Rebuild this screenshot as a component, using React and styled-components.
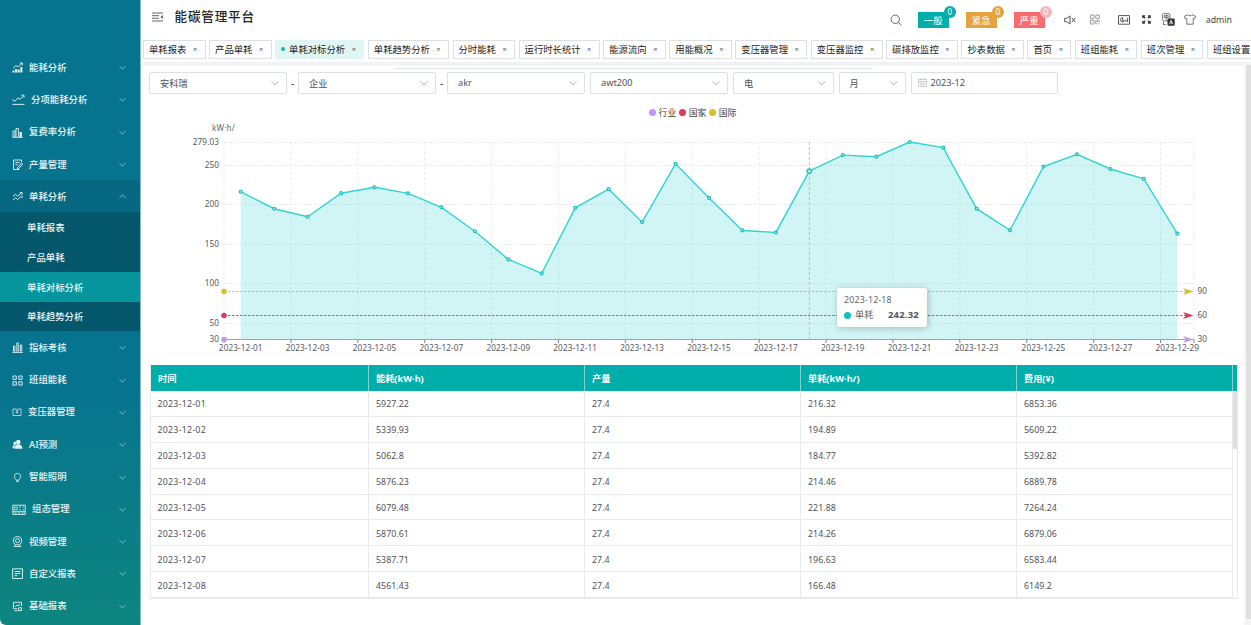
import styled, { createGlobalStyle } from "styled-components";

const GlobalStyle = createGlobalStyle`
  * {
    box-sizing: border-box;
  }

  body {
    margin: 0;
    overflow: hidden;
    background-color: #fff;
    font-family: "Noto Sans", "Noto Sans CJK SC", sans-serif;
    color: #303133;
  }

  svg {
    display: block;
    flex: none;
  }
`;

const menuTop = [
  { icon: "trend", label: "能耗分析" },
  { icon: "line", label: "分项能耗分析", iconWidth: 13, gap: 6 },
  { icon: "bars", label: "复费率分析" },
  { icon: "edit", label: "产量管理" },
  { icon: "compare", label: "单耗分析", open: true },
];

const subMenu = ["单耗报表", "产品单耗", "单耗对标分析", "单耗趋势分析"];

const menuBottom = [
  { icon: "columns", label: "指标考核" },
  { icon: "grid", label: "班组能耗" },
  { icon: "transformer", label: "变压器管理", iconWidth: 10 },
  { icon: "users", label: "AI预测" },
  { icon: "bulb", label: "智能照明" },
  { icon: "config", label: "组态管理", iconWidth: 14, gap: 6 },
  { icon: "camera", label: "视频管理" },
  { icon: "form", label: "自定义报表" },
  { icon: "report", label: "基础报表" },
];

const tabs = [
  "单耗报表",
  "产品单耗",
  "单耗对标分析",
  "单耗趋势分析",
  "分时能耗",
  "运行时长统计",
  "能源流向",
  "用能概况",
  "变压器管理",
  "变压器监控",
  "碳排放监控",
  "抄表数据",
  "首页",
  "班组能耗",
  "班次管理",
  "班组设置",
];

const activePage = "单耗对标分析";

const values = [
  216.32, 194.89, 184.77, 214.46, 221.88, 214.26, 196.63, 166.48, 131, 113.5,
  196, 219.5, 178, 251.5, 208.5, 167.5, 165, 242.32, 262.5, 260.5, 279.03, 272,
  195, 167.8, 248, 263.5, 245, 232.5, 163.5,
];

const marks = [
  { name: "行业", value: 30, color: "#c397f5" },
  { name: "国家", value: 60, color: "#dd3a60" },
  { name: "国际", value: 90, color: "#d3c227" },
];

const columns = ["时间", "能耗(kW·h)", "产量", "单耗(kW·h/)", "费用(¥)"];

const rows = [
  ["2023-12-01", "5927.22", "27.4", "216.32", "6853.36"],
  ["2023-12-02", "5339.93", "27.4", "194.89", "5609.22"],
  ["2023-12-03", "5062.8", "27.4", "184.77", "5392.82"],
  ["2023-12-04", "5876.23", "27.4", "214.46", "6889.78"],
  ["2023-12-05", "6079.48", "27.4", "221.88", "7264.24"],
  ["2023-12-06", "5870.61", "27.4", "214.26", "6879.06"],
  ["2023-12-07", "5387.71", "27.4", "196.63", "6583.44"],
  ["2023-12-08", "4561.43", "27.4", "166.48", "6149.2"],
];

// Iconos del menú lateral
const icons = {
  trend: (
    <>
      <path d="M1 6.2 4 3.6l2 1.3 4-3.7M7.8 1h2.6v2.4" />
      <path d="M1.5 10.5V8.6M4.1 10.5V7M6.7 10.5V7.6M9.4 10.5V5" strokeWidth="2" />
    </>
  ),
  line: <path d="M.4 5.6 3 7.2l3-3.4 2 1.6L11.3 2M9.4 1.2h2.6v2.4M.4 10.4h12.2" />,
  bars: (
    <>
      <path d="M1 10V4h2v6M4 10V1.5h2.4V10M.4 10.3h10.4" />
      <path d="M8.7 10V5" strokeWidth="2.3" />
    </>
  ),
  edit: (
    <>
      <path d="M9.5 3.2V1h-8v9.5h6M3.3 3.5h4.2M3.3 5.6h2.4" />
      <path d="M5.5 8.5 9.4 4l1.3 1-3.8 4.5-1.5.3z" />
    </>
  ),
  compare: <path d="M1 5.4 3.5 3.2l2 2L9.7 1.7M7.8 1.5h2.3v2.2M1 9l2.6-2.3 2 2L9.5 5M10 4.8v2.3" />,
  columns: <path d="M.4 10.4h10.4M1.5 9.2V4h1.4v5.2zM4.8 9.2V1h1.5v8.2zM8.3 9.2V3h1.4v6.2z" />,
  grid: (
    <>
      <path d="M1 1h3.3v3.3H1zM6.8 1h3.3v3.3H6.8zM6.8 6.8h3.3v3.3H6.8z" />
      <rect x="1" y="6.8" width="3.3" height="3.3" />
    </>
  ),
  transformer: <path d="M1 2h3M6 2h3M1 2v6.500h8V2M3.700 3.500h2.600M5 1.500v5M3.700 5.500h2.600" strokeWidth=".7" />,
  users: (
    <g fill="currentColor" stroke="none">
      <circle cx="6.3" cy="3" r="2.2" />
      <path d="M2.6 9.8c0-3 1.4-4.5 3.7-4.5s4.2 1.5 4.2 4.5z" />
      <circle cx="3" cy="4.2" r="1.6" />
      <path d="M.4 9.2c0-2.3 1-3.4 2.6-3.4L2.3 9.2z" />
    </g>
  ),
  bulb: <path d="M3.800 7.200C1.700 5.600 2 1.400 5.500 1.400s3.800 4.200 1.700 5.800L6.500 8.300h-2zM4.200 9.600h2.600" />,
  config: (
    <>
      <path d="M.8 1.2h12.400v9.200H.8zM.8 7.700h12.400" />
      <path d="M2.300 3.200h3v2.600h-3zM7 3h2M7 5.800h2M10.500 3h1.500M10.500 5.800h1.500M2.500 9h2M6 9h2M9.600 9h2" strokeWidth=".8" />
    </>
  ),
  camera: (
    <>
      <circle cx="5.500" cy="4.700" r="4.100" />
      <circle cx="5.500" cy="4.700" r="2" />
      <path d="M3.500 8.500 2.200 10.500h6.600L7.500 8.500" />
    </>
  ),
  form: <path d="M.6.8h9.900v9.700H.6zM2.700 3.500h5.800M2.700 5.600h5.800M2.700 7.700h2.600" />,
  report: (
    <>
      <path d="M9.500 5V1.300H1.500v6.400H5M2.500 9.700h3" />
      <path d="M3.200 5.700 5 4l1.200 1L8 3M6.300 9.500h3.200V6.600l-3.200.5z" />
    </>
  ),
};

const MenuIcon = ({ name, width = 11 }) => (
  <svg
    width={width}
    height="11"
    viewBox={`0 0 ${width} 11`}
    fill="none"
    stroke="currentColor"
    strokeWidth="0.9"
  >
    {icons[name]}
  </svg>
);

const Chevron = ({ up, size = 7 }) => (
  <svg width={size} height={size} viewBox="0 0 8 8" fill="none" stroke="currentColor">
    <path d={up ? "M.5 5.500 4 2.300l3.500 3.200" : "M.5 2.500 4 5.700l3.500-3.200"} strokeWidth="0.9" />
  </svg>
);

const MenuEntry = ({ item }) => (
  <MenuItem $open={item.open}>
    <MenuIcon name={item.icon} width={item.iconWidth} />
    <MenuLabel $gap={item.gap}>{item.label}</MenuLabel>
    <Chevron up={item.open} />
  </MenuItem>
);

const Sidebar = () => (
  <StyledSidebar>
    {menuTop.map((item) => (
      <MenuEntry key={item.label} item={item} />
    ))}
    {subMenu.map((label) => (
      <SubItem key={label} $active={label === activePage}>
        {label}
      </SubItem>
    ))}
    {menuBottom.map((item) => (
      <MenuEntry key={item.label} item={item} />
    ))}
  </StyledSidebar>
);

const Header = () => (
  <StyledHeader>
    <svg width="11" height="10" viewBox="0 0 11 10" fill="none" stroke="#555" strokeWidth="0.9">
      <path d="M0 1h11M0 3.700h7M0 6.300h7M0 9h11" />
      <path d="M10.800 3v4L8.500 5z" fill="#555" stroke="none" />
    </svg>
    <Title>能碳管理平台</Title>
    <Tools>
      <svg width="12" height="12" viewBox="0 0 12 12" fill="none" stroke="#666">
        <circle cx="5.300" cy="5.300" r="4.200" />
        <path d="m8.400 8.400 3 3" />
      </svg>
      <Alarm $color="#01aeaa" $left={16}>
        一般<Count $color="#01aeaa">0</Count>
      </Alarm>
      <Alarm $color="#e6a23c" $left={17}>
        紧急<Count $color="#e6a23c">0</Count>
      </Alarm>
      <Alarm $color="#f86c6e" $left={17}>
        严重<Count $color="#fbb5b6">0</Count>
      </Alarm>
      <ToolIcon $left={19}>
        <svg width="12" height="10" viewBox="0 0 12 10" fill="none" stroke="#444" strokeWidth="0.9">
          <path d="M.7 3.300h2.200L6 .9v8.200L2.900 6.700H.7zM7.800 2.800l3.600 4.400M11.400 2.800 7.800 7.200" />
        </svg>
      </ToolIcon>
      <ToolIcon $left={14}>
        <svg width="10" height="11" viewBox="0 0 10 11" fill="none" stroke="#777" strokeWidth="0.8">
          <rect x=".5" y="1" width="3.500" height="3.700" rx=".5" />
          <rect x="5.800" y="1" width="3.500" height="3.700" rx=".5" />
          <rect x=".5" y="6.300" width="3.500" height="3.700" rx=".5" />
          <path d="M5.900 6v4.200M7.500 6v2M9.200 6v2M7.500 9.800h2" />
        </svg>
      </ToolIcon>
      <ToolIcon $left={18}>
        <svg width="12" height="10" viewBox="0 0 12 10" fill="none" stroke="#444" strokeWidth="0.9">
          <path d="M.5.600h11v8.600H.5z" />
          <path d="M4.600 2.700a2.100 2.100 0 1 0 1.900 3H4.600zM8 7V4.500M9.600 7V2.800" />
        </svg>
      </ToolIcon>
      <ToolIcon $left={12}>
        <svg width="9" height="9" viewBox="0 0 9 9" fill="none" stroke="#333" strokeWidth="1.200">
          <path d="M.8 3V.8H3M6 .8h2.200V3M8.200 6v2.200H6M3 8.200H.8V6M.8.800l2.500 2.500M8.200.800 5.700 3.300M8.200 8.200 5.700 5.700M.8 8.200l2.500-2.500" />
        </svg>
      </ToolIcon>
      <ToolIcon $left={11}>
        <svg width="13" height="13" viewBox="0 0 13 13" fill="none" stroke="#555" strokeWidth="0.8">
          <rect x=".6" y=".6" width="7.300" height="7.300" rx="1" />
          <path d="M2.300 2.600h3.900v2H2.300zM4.250 1.600v5M1.500 9v2.500H4" />
          <rect x="5.500" y="5.500" width="7.200" height="7.200" rx="1" fill="#333" stroke="none" />
          <path d="m7.500 11.200 1.600-4 1.600 4M8.100 9.900h2" stroke="#fff" />
        </svg>
      </ToolIcon>
      <ToolIcon $left={9}>
        <svg width="12" height="11" viewBox="0 0 12 11" fill="none" stroke="#555" strokeWidth="0.8">
          <path d="M4 .7c.4 1.400 3.600 1.400 4 0l3.500 1.500-.8 2.700-1.500-.4v5.700H2.800V4.500l-1.500.4L.5 2.200z" />
        </svg>
      </ToolIcon>
      <User>admin</User>
    </Tools>
  </StyledHeader>
);

const TabBar = () => (
  <StyledTabBar>
    {tabs.map((label) => (
      <Tab key={label} $active={label === activePage}>
        {label}
        <Close>×</Close>
      </Tab>
    ))}
  </StyledTabBar>
);

const Filters = () => (
  <StyledFilters>
    <Select $width={138}>
      安科瑞 <Chevron size={8} />
    </Select>
    <Dash>-</Dash>
    <Select $width={138}>
      企业 <Chevron size={8} />
    </Select>
    <Dash>-</Dash>
    <Select $width={138}>
      akr <Chevron size={8} />
    </Select>
    <Select $width={138} $left={5}>
      awt200 <Chevron size={8} />
    </Select>
    <Select $width={101} $left={5}>
      电 <Chevron size={8} />
    </Select>
    <Select $width={67} $left={4.5}>
      月 <Chevron size={8} />
    </Select>
    <DateInput>
      <svg width="9" height="9" viewBox="0 0 9 9" fill="none" stroke="#b6b9c0" strokeWidth="0.7">
        <path d="M.5 1.400h8v7.100h-8zM.5 3.400h8M2.500.300v1.800M6.500.300v1.800M2 5h5M2 6.800h5" />
      </svg>
      2023-12
    </DateInput>
  </StyledFilters>
);

const plot = { left: 83, right: 1053, top: 44, bottom: 241.500 };
const step = (plot.right - plot.left) / values.length;
const maxValue = 279.03;
const minValue = 30;
const toX = (index) => plot.left + step * (index + 0.5);
const toY = (value) =>
  plot.bottom -
  ((value - minValue) / (maxValue - minValue)) * (plot.bottom - plot.top);

const Chart = () => {
  const points = values.map((value, index) => `${toX(index)},${toY(value)}`);
  const ticks = [279.03, 250, 200, 150, 100, 50, 30];
  const labels = values.map((_, index) => index).filter((index) => index % 2 === 0);

  return (
    <ChartBox>
      <Legend>
        {marks.map((mark) => (
          <LegendItem key={mark.name} $color={mark.color}>
            {mark.name}
          </LegendItem>
        ))}
      </Legend>
      <ChartSvg width="1103" height="264" viewBox="0 0 1103 264">
        <AxisText x="71" y="33" $name>
          kW·h/
        </AxisText>
        {ticks.map((tick) => (
          <g key={tick}>
            <line
              x1={plot.left}
              x2={plot.right}
              y1={Math.round(toY(tick) - 0.5) + 0.5}
              y2={Math.round(toY(tick) - 0.5) + 0.5}
              stroke="#e8eaed"
              strokeDasharray="3 2"
            />
            <AxisText x="78" y={toY(tick) + 2.500} textAnchor="end">
              {tick}
            </AxisText>
          </g>
        ))}
        {labels.map((index) => (
          <g key={index}>
            <line
              x1={plot.left + step * index}
              x2={plot.left + step * index}
              y1={plot.top}
              y2={plot.bottom}
              stroke="#ebedf0"
              strokeDasharray="3 2"
            />
            <AxisText x={toX(index)} y="253" textAnchor="middle">
              {`2023-12-${String(index + 1).padStart(2, "0")}`}
            </AxisText>
          </g>
        ))}
        <line
          x1={plot.right}
          x2={plot.right}
          y1={plot.top}
          y2={plot.bottom}
          stroke="#ebedf0"
          strokeDasharray="3 2"
        />
        <polygon
          points={`${toX(0)},${plot.bottom} ${points.join(" ")} ${toX(28)},${plot.bottom}`}
          fill="#1bcfcf"
          fillOpacity="0.2"
        />
        <line x1={plot.left} x2={plot.right} y1="241.500" y2="241.500" stroke="#6e7099" strokeWidth="0.8" />
        {[...labels, 29].map((index) => (
          <line
            key={index}
            x1={plot.left + step * index}
            x2={plot.left + step * index}
            y1="242"
            y2="245"
            stroke="#5b5f93"
            strokeWidth="0.8"
          />
        ))}
        <line
          x1={toX(17)}
          x2={toX(17)}
          y1={plot.top}
          y2={plot.bottom}
          stroke="#a9b3b8"
          strokeWidth="0.8"
          strokeDasharray="3 2"
        />
        <polyline points={points.join(" ")} fill="none" stroke="#34d3d3" strokeWidth="1.400" />
        {values.map((value, index) => (
          <circle
            key={index}
            cx={toX(index)}
            cy={toY(value)}
            r={index === 17 ? 2.300 : 1.500}
            fill="#a6e9e9"
            stroke="#1fbfbf"
            strokeWidth="1.200"
          />
        ))}
        {marks.map((mark) => {
          const y = Math.round(toY(mark.value) - 0.5) + 0.5;
          return (
            <g key={mark.name}>
              <line
                x1={plot.left}
                x2={plot.right - 7}
                y1={y}
                y2={y}
                stroke={mark.color}
                strokeWidth="0.9"
                strokeDasharray="2.600 1.400"
              />
              <circle cx={plot.left} cy={y} r="2.800" fill={mark.color} />
              <path
                d={`M${plot.right - 0.5} ${y}l-10.500 -3.600l2.800 3.600l-2.800 3.600z`}
                fill={mark.color}
              />
              <AxisText x={plot.right + 3.500} y={y + 2.500}>
                {mark.value}
              </AxisText>
            </g>
          );
        })}
      </ChartSvg>
      <Tooltip>
        <TooltipDate>2023-12-18</TooltipDate>
        <TooltipRow>
          单耗 <strong>242.32</strong>
        </TooltipRow>
      </Tooltip>
    </ChartBox>
  );
};

const DataTable = () => (
  <StyledTable>
    <TableRow $head>
      {columns.map((column) => (
        <HeadCell key={column}>{column}</HeadCell>
      ))}
    </TableRow>
    <TableBody>
      <div>
        {rows.map((row) => (
          <TableRow key={row[0]}>
            {row.map((value, index) => (
              <Cell key={index} $date={index === 0}>
                {value}
              </Cell>
            ))}
          </TableRow>
        ))}
      </div>
      <TableThumb />
    </TableBody>
  </StyledTable>
);

export default function App() {
  return (
    <Layout>
      <GlobalStyle />
      <Sidebar />
      <Main>
        <Header />
        <TabBar />
        <Content>
          <Page>
            <TopLine />
            <Filters />
            <Chart />
            <DataTable />
          </Page>
          <PageScroll />
        </Content>
      </Main>
    </Layout>
  );
}

const Layout = styled.div`
  display: flex;
  width: 1251px;
  height: 625px;
  overflow: hidden;
  border-radius: 0 6px 0 6px;
`;

const StyledSidebar = styled.nav`
  flex: none;
  width: 141px;
  padding-top: 51px;
  border-right: 1px solid #85bccb;
  background: linear-gradient(180deg, #07748f 0%, #07748f 62%, #0d857f 100%);
  color: #eaf5f7;
`;

const MenuItem = styled.div`
  display: flex;
  align-items: center;
  height: 32.3px;
  padding: 1px 14px 0 12px;
  background-color: ${({ $open }) => ($open ? "#076981" : "transparent")};

  svg:last-child {
    color: #a5ccd6;
  }
`;

const MenuLabel = styled.span`
  flex: 1;
  margin-left: ${({ $gap = 6 }) => $gap}px;
  font-size: 9.4px;
  font-weight: 500;
  line-height: 14px;
  white-space: nowrap;
`;

const SubItem = styled.div`
  display: flex;
  align-items: center;
  height: 29.7px;
  padding-left: 27px;
  background-color: ${({ $active }) => ($active ? "#06959d" : "#05586b")};
  font-size: 9.4px;
  font-weight: 500;
`;

const Main = styled.main`
  flex: 1;
  min-width: 0;
  display: flex;
  flex-direction: column;
`;

const StyledHeader = styled.header`
  display: flex;
  align-items: center;
  height: 36px;
  padding: 0 19px 3px 11px;
`;

const Title = styled.h1`
  margin: 0 0 0 11.5px;
  font-size: 12.6px;
  font-weight: 500;
  letter-spacing: 0.8px;
  line-height: 18px;
  color: #222;
`;

const Tools = styled.div`
  display: flex;
  align-items: center;
  margin-left: auto;
  padding-top: 6px;
`;

const Alarm = styled.div`
  position: relative;
  display: flex;
  align-items: center;
  justify-content: center;
  width: 31px;
  height: 16px;
  margin-left: ${({ $left }) => $left}px;
  background-color: ${({ $color }) => $color};
  font-size: 9.4px;
  color: #fff;
`;

const Count = styled.span`
  position: absolute;
  top: -6px;
  right: -7px;
  width: 12px;
  height: 12px;
  border-radius: 6px;
  background-color: ${({ $color }) => $color};
  font-size: 8px;
  line-height: 12px;
  text-align: center;
`;

const ToolIcon = styled.span`
  margin-left: ${({ $left }) => $left}px;
`;

const User = styled.span`
  margin-left: 10px;
  font-size: 8.8px;
  line-height: 14px;
  color: #444;
`;

const StyledTabBar = styled.div`
  display: flex;
  gap: 3.5px;
  height: 26px;
  padding: 4px 0 0 2px;
  overflow: hidden;
`;

const Tab = styled.div`
  flex: none;
  display: flex;
  align-items: center;
  height: 18.5px;
  padding: 0 5px 1px;
  border: 1px solid ${({ $active }) => ($active ? "#e0f6f4" : "#dcdfe4")};
  background-color: ${({ $active }) => ($active ? "#e0f6f4" : "#fff")};
  font-size: 9.35px;
  color: #222;
  white-space: nowrap;

  &::before {
    content: "";
    display: ${({ $active }) => ($active ? "block" : "none")};
    width: 4px;
    height: 4px;
    margin-right: 4px;
    border-radius: 2px;
    background-color: #13b5b1;
  }
`;

const Close = styled.span`
  width: 9px;
  margin-left: 4.15px;
  font-size: 7.5px;
  text-align: center;
  color: #555;
`;

const Content = styled.div`
  flex: 1;
  display: flex;
  border-top: 3px solid #f0f1f4;
`;

const Page = styled.div`
  width: 1103px;
  border-top: 1px solid #f9f9fb;
`;

const PageScroll = styled.div`
  width: 7px;
  border-left: 2px solid #f7f7f8;
  border-bottom: 6px solid #f4f4f5;
  background-color: #dfdfe0;
`;

const TopLine = styled.div`
  width: 478px;
  height: 1px;
  margin: 2px 0 3px 254px;
  background-color: #dfe1e5;
`;

const StyledFilters = styled.div`
  display: flex;
  height: 22px;
  padding-left: 8px;
`;

const Select = styled.div`
  display: flex;
  align-items: center;
  justify-content: space-between;
  width: ${({ $width }) => $width}px;
  margin-left: ${({ $left = 0 }) => $left}px;
  padding: 0 7px 1px 10px;
  border: 1px solid #dcdfe4;
  border-radius: 2px;
  font-size: 9.2px;
  color: #505256;

  svg {
    color: #a8abb2;
  }
`;

const Dash = styled.span`
  width: 11px;
  font-size: 10px;
  line-height: 22px;
  text-align: center;
`;

const DateInput = styled.div`
  display: flex;
  align-items: center;
  gap: 4px;
  width: 147px;
  margin-left: 5px;
  padding: 0 0 1px 6px;
  border: 1px solid #dcdfe4;
  border-radius: 2px;
  font-size: 9.2px;
  color: #505256;
`;

const ChartBox = styled.section`
  position: relative;
  height: 271px;
  padding-top: 11px;
`;

const Legend = styled.div`
  display: flex;
  justify-content: center;
  gap: 2.5px;
  height: 14px;
`;

const LegendItem = styled.span`
  display: flex;
  align-items: center;
  gap: 3px;
  font-size: 8.8px;
  color: #444;

  &::before {
    content: "";
    width: 7px;
    height: 7px;
    border-radius: 50%;
    background-color: ${({ $color }) => $color};
  }
`;

const ChartSvg = styled.svg`
  margin-top: -21px;
`;

const AxisText = styled.text`
  font-size: 8.2px;
  letter-spacing: 0.1px;
  fill: ${({ $name }) => ($name ? "#5f6b7e" : "#55585f")};
`;

const Tooltip = styled.div`
  position: absolute;
  top: 194px;
  left: 696px;
  width: 90px;
  height: 39px;
  padding: 5px 8px 5px 7px;
  border-radius: 3px;
  background-color: #fff;
  box-shadow: 1px 1px 6px rgba(0, 0, 0, 0.25);
  font-size: 9.2px;
  color: #666;
`;

const TooltipDate = styled.div`
  font-size: 8.9px;
  line-height: 14px;
  letter-spacing: 0.15px;
`;

const TooltipRow = styled.div`
  display: flex;
  align-items: center;
  line-height: 16px;

  &::before {
    content: "";
    width: 7px;
    height: 7px;
    margin-right: 4px;
    border-radius: 50%;
    background-color: #13bfc0;
  }

  strong {
    margin-left: auto;
    font-size: 9.5px;
    letter-spacing: 0.2px;
    color: #555;
  }
`;

const StyledTable = styled.div`
  width: 1088px;
  margin-left: 9px;
  border: 1px solid #e8eaed;
  border-top: none;
`;

const TableRow = styled.div`
  display: grid;
  grid-template-columns: 218px repeat(4, 216px);
  height: ${({ $head }) => ($head ? 26 : 25.9)}px;
  background-color: ${({ $head }) => ($head ? "#01aeaa" : "#fff")};
`;

const HeadCell = styled.div`
  display: flex;
  align-items: center;
  padding-left: 7px;
  border-right: 1px solid #7fd2d0;
  font-size: 9.2px;
  font-weight: 700;
  color: #fff;
`;

const TableBody = styled.div`
  display: flex;
`;

const Cell = styled.div`
  display: flex;
  align-items: center;
  padding: 2px 0 0 ${({ $date }) => ($date ? 6.5 : 7)}px;
  border-right: 1px solid #e8eaed;
  border-bottom: 1px solid #e8eaed;
  font-size: 8.8px;
  letter-spacing: ${({ $date }) => ($date ? 0.25 : 0.05)}px;
  color: #505256;
`;

const TableThumb = styled.div`
  width: 4px;
  height: 58px;
  background-color: #dedfe1;
`;
